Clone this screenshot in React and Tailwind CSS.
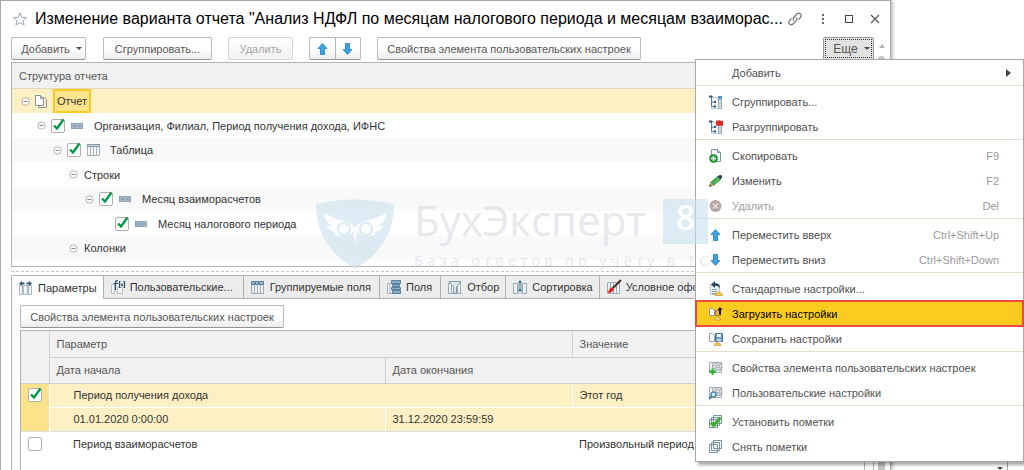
import React, { useState } from 'react';

const TableIcon = ({ head = '#5b7d95', children }) => (
  <svg viewBox="0 0 16 16" className="w-4 h-4 shrink-0" aria-hidden="true">
    <rect x="1.5" y="3.5" width="12" height="11" fill="#eef2f4" stroke="#9aabb5" />
    <path d="M2 3h11v2.5H2z" fill={head} />
    <path d="M4.5 6v8M7.5 6v8M10.5 6v8" stroke="#9aabb5" fill="none" />
    {children}
  </svg>
);

const ParamsIcon = () => (
  <svg viewBox="0 0 16 16" className="w-4 h-4 shrink-0" aria-hidden="true">
    <path d="M1.5 5.5h3v9h-3zM5.5 5.5h4v9h-4zM10.5 5.5h3v9h-3z" fill="#f0f4f6" stroke="#a9b8c1" />
    <path d="M1 3.5L4 1v1.500h2.500v2H4V6zM14 3.500L11 1v1.500H8.500v2H11V6z" fill="#35586f" />
  </svg>
);

const FunctionIcon = () => (
  <svg viewBox="0 0 16 16" className="w-4 h-4 shrink-0" aria-hidden="true">
    <path d="M1.5 5.5h3v9h-3zM7.5 8.5h5v6h-5z" fill="#f3f6f8" stroke="#b3c0c8" />
    <path d="M8 1.500c-2 0-2.500.5-2.500 2.500v7M3.500 4.500H8M10.500 2.500h-1v6h1M13.500 2.500h1v6h-1" stroke="#2f526b" strokeWidth="1.2" fill="none" />
    <path d="M11 4.500l2 2.500M13 4.500L11 7" stroke="#2f526b" fill="none" />
  </svg>
);

const GroupFieldsIcon = () => (
  <TableIcon head="#44708f">
    <path d="M1.5 2.5h3v3h-3zM5.5 2.5h3v3h-3zM9.5 2.5h4v3h-4z" fill="#9fc0d6" stroke="#5a7d95" />
  </TableIcon>
);

const FieldsIcon = () => (
  <svg viewBox="0 0 16 16" className="w-4 h-4 shrink-0" aria-hidden="true">
    <path d="M1.5 4.5h5v10h-5zM4 5v9" fill="#f3f6f8" stroke="#a3b2bb" />
    <path d="M5.5 1.5h9v3h-9zM6.5 5.5h7v2h-7zM5.5 8.5h9v2h-9zM6.5 11.5h8v3h-8z" fill="#8db3cc" stroke="#5b8099" />
  </svg>
);

const FilterIcon = () => (
  <svg viewBox="0 0 16 16" className="w-4 h-4 shrink-0" aria-hidden="true">
    <rect x="1.5" y="4.5" width="12" height="10" fill="#eef2f4" stroke="#9aabb5" />
    <path d="M4.5 5v9M10.5 5v9" stroke="#9aabb5" />
    <path d="M2 2.5h12L9.5 8v6h-3V8z" fill="#dce6ec" stroke="#8498a6" />
  </svg>
);

const SortIcon = () => (
  <svg viewBox="0 0 16 16" className="w-4 h-4 shrink-0" aria-hidden="true">
    <path d="M1.5 4.5h4v10h-4zM10.5 4.5h4v10h-4z" fill="#eef2f4" stroke="#9aabb5" />
    <path d="M6.5 3.5h3v11h-3z" fill="#fff" stroke="#b0bec7" />
    <path d="M8 1l2 2.5H8.500v7H10L8 13l-2-2.500h1.500v-7H6z" fill="#26638f" />
  </svg>
);

const BrushIcon = () => (
  <svg viewBox="0 0 16 16" className="w-4 h-4 shrink-0" aria-hidden="true">
    <path d="M1.5 3.5h12v11h-12zM4.5 4v10M7.5 4v10M10.5 4v10" fill="#eef2f4" stroke="#9aabb5" />
    <path d="M15 1L6.5 9.5" stroke="#4a2419" strokeWidth="1.8" />
    <path d="M5.5 8.5l2 2c0 2-3 3.500-6 3.500 1.500-1 1.500-5.500 4-5.500z" fill="#ec1c1c" />
  </svg>
);

const ArrowIcon = ({ down }) => (
  <svg viewBox="0 0 16 16" className="w-4 h-4 shrink-0" aria-hidden="true">
    <path
      d={down ? 'M7.5 13.5L3 8.5h2.5v-6h4v6H12z' : 'M7.5 2.5l4.500 5H9.500v6h-4v-6H3z'}
      fill="#3aa5e2"
      stroke="#2a7db5"
      strokeWidth="0.8"
    />
  </svg>
);

const GroupIcon = ({ remove }) => (
  <svg viewBox="0 0 16 16" className="w-4 h-4 shrink-0" aria-hidden="true">
    <path d="M3.5 3.5h9v11h-9z" fill="#f3f6f8" stroke="#c3cdd3" />
    <path d="M1 2.500h4M3.500 3v9.500H7M3.500 8H6" stroke="#5a7d95" fill="none" />
    <path d="M10.5 2.5h3v12h-3zM10.5 6h3M10.5 9h3M10.5 12h3" fill="#dfe7ec" stroke="#9aabb5" />
    <path d="M10 2h4v3h-4z" fill="#4f96c6" />
    <path d="M1 1.500h3v2H1zM6 7h2v2H6zM6 11.500h2v2H6z" fill="#31566f" />
    {remove && <path d="M8 1.500l2 .3L11.500 1 13 2l2-.5V7l-2-.5-1.500.5L10 6.500 8 7z" fill="#dc2a2a" />}
  </svg>
);

const CopyIcon = () => (
  <svg viewBox="0 0 16 16" className="w-4 h-4 shrink-0" aria-hidden="true">
    <path d="M3.5 1.500h6l3 3v9h-9z" fill="#f6f8f9" stroke="#7d95a4" />
    <path d="M9.5 1.500v3h3" fill="none" stroke="#7d95a4" />
    <circle cx="5.5" cy="10.500" r="4" fill="#1f9c38" stroke="#147528" strokeWidth="0.6" />
    <path d="M5.5 8v5M3 10.500h5" stroke="#fff" strokeWidth="1.4" />
  </svg>
);

const PencilIcon = () => (
  <svg viewBox="0 0 16 16" className="w-4 h-4 shrink-0" aria-hidden="true">
    <path d="M1.5 13.5l1.5-4.500 3 3z" fill="#eab766" stroke="#77623f" strokeWidth="0.7" />
    <path d="M3 9l6.500-5.500 3 3L6 12z" fill="#4eb556" stroke="#2f7f39" strokeWidth="0.7" />
    <path d="M9.5 3.500L11.500 2h1.500l1 1v1.500l-1.500 2z" fill="#2f4456" />
    <path d="M1.5 13.500l.7-2 1.300 1.300z" fill="#333" />
  </svg>
);

const DeleteIcon = () => (
  <svg viewBox="0 0 16 16" className="w-4 h-4 shrink-0" aria-hidden="true">
    <circle cx="7.5" cy="8" r="6" fill="#b8a5a5" />
    <path d="M5 5.500l5 5M10 5.500l-5 5" stroke="#e8e1e1" strokeWidth="1.4" />
  </svg>
);

const StandardIcon = () => (
  <svg viewBox="0 0 16 16" className="w-4 h-4 shrink-0" aria-hidden="true">
    <path d="M2.5 3.500h9v10h-9z" fill="#eef3f6" stroke="#b5c5cf" />
    <path d="M4 8.500h5M4 10.500h5M4 12.500h4" stroke="#7fa0b6" />
    <path d="M3 3.500L7 0v2.200c3.500 0 5 2 5 5.800-1-2-2-3.200-5-3.200V7z" fill="#1f4560" />
    <path d="M7 14.500c0-2 2-3.500 3.500-3.500s4 1.500 4 3.500z" fill="#f6c646" stroke="#c9962a" strokeWidth="0.7" />
  </svg>
);

const LoadIcon = () => (
  <svg viewBox="0 0 16 16" className="w-4 h-4 shrink-0" aria-hidden="true">
    <path d="M1.5 2.500h3l2 2v5h-5z" fill="#fff" stroke="#8b98a0" />
    <path d="M7.5 4.500h5v5h-5z" fill="#f4b12c" stroke="#a77d2c" />
    <path d="M12 1l2.500 3H13v4.500h-2V4H9.500z" fill="#111" />
    <path d="M6.500 14c0-2 1.500-3 3-3s3 1 3 3z" fill="#fbe28c" stroke="#c28e20" strokeWidth="0.8" />
  </svg>
);

const SaveIcon = () => (
  <svg viewBox="0 0 16 16" className="w-4 h-4 shrink-0" aria-hidden="true">
    <path d="M1.5 2.500h3l2 2v6h-5z" fill="#fff" stroke="#8b9fac" />
    <path d="M7.500 2.500h7v8h-7z" fill="#6f9dc0" stroke="#4c7698" />
    <path d="M9 3h4v3H9z" fill="#e8f0f5" />
    <path d="M9 8h4v2.500H9z" fill="#c3d5e2" />
    <path d="M6.500 14.500c0-2 1.500-3 3-3s3.500 1 3.500 3z" fill="#f6c646" stroke="#c9962a" strokeWidth="0.7" />
  </svg>
);

const GearIcon = ({ search }) => (
  <svg viewBox="0 0 16 16" className="w-4 h-4 shrink-0" aria-hidden="true">
    <path d="M1.5 2.500h12v10h-12zM4.500 3v9" fill="#f0f2f3" stroke="#a5afb5" />
    <circle cx="10" cy="6.500" r="4" fill="#d9dde0" stroke="#8f999f" strokeWidth="1.200" strokeDasharray="2 1" />
    <circle cx="10" cy="6.500" r="1.500" fill="#fff" stroke="#8f999f" />
    {search ? (
      <>
        <circle cx="5.500" cy="9.500" r="2.500" fill="#dceaf5" stroke="#3b749c" strokeWidth="1.200" />
        <path d="M3.700 11.300L1 14" stroke="#3b749c" strokeWidth="1.800" />
      </>
    ) : (
      <path d="M4.500 8.500v6.500M1 11.500h7" stroke="#1fb32e" strokeWidth="2" />
    )}
  </svg>
);

const MarksIcon = ({ checked }) => (
  <svg viewBox="0 0 16 16" className="w-4 h-4 shrink-0" aria-hidden="true">
    <path d="M5.500 1.500h8v8h-8zM3.500 3.500h8v8h-8zM1.500 5.500h8v8h-8z" fill="#f5f8fa" stroke="#7b92a3" />
    {checked && <path d="M3 8.500L5.500 11.500L12.500 3.500" fill="none" stroke="#3fae2a" strokeWidth="3" />}
  </svg>
);

const ReportIcon = () => (
  <svg viewBox="0 0 12 14" className="w-3 h-3.5 shrink-0" aria-hidden="true">
    <path d="M.5 1.500h5l3 3v7h-8z" fill="#fff" stroke="#7f93a1" />
    <path d="M8.500 3.500h1l2 2v8H3.500v-2" fill="none" stroke="#7f93a1" />
    <path d="M5.500 1.500v3h3" fill="none" stroke="#7f93a1" />
  </svg>
);

const FieldIcon = () => (
  <svg viewBox="0 0 12 6" className="w-3 h-1.5 shrink-0" aria-hidden="true">
    <rect x="0.500" y="0.500" width="11" height="5" fill="#b9c8d4" stroke="#8ea3b5" />
    <path d="M2 2h1.500v2H2zM5 2h2v2H5zM8.500 2H10v2H8.500z" fill="#fff" stroke="#68839a" strokeWidth="0.800" />
  </svg>
);

const GridIcon = () => (
  <svg viewBox="0 0 13 12" className="w-[13px] h-3 shrink-0" aria-hidden="true">
    <path d="M.5.5h12v11H.5zM3.500 3v8.500M6.500 3v8.500M9.500 3v8.500" fill="#f4f5f6" stroke="#a9b1b6" />
    <path d="M.5.5h12v2H.5z" fill="#c9d4dc" stroke="#8798a6" />
  </svg>
);

const Toggle = () => (
  <button type="button" aria-label="Свернуть" className="flex shrink-0">
    <svg viewBox="0 0 9 9" className="w-[9px] h-[9px]">
      <circle cx="4.500" cy="4.500" r="3.700" fill="#fff" stroke="#a3a3a3" strokeWidth="0.800" />
      <path d="M2.500 4.500h4" stroke="#8a8a8a" />
    </svg>
  </button>
);

const Check = ({ label, initial = true }) => {
  const [checked, setChecked] = useState(initial);

  return (
    <span className="relative flex w-3.5 h-3.5 shrink-0">
      <input
        type="checkbox"
        aria-label={label}
        checked={checked}
        onChange={() => setChecked(!checked)}
        className="appearance-none w-3.5 h-3.5 border border-[#b0b0b0] rounded-xs bg-white"
      />
      {checked && (
        <svg viewBox="0 0 14 14" className="absolute inset-0 w-3.5 h-3.5 pointer-events-none overflow-visible">
          <path d="M3 6.500L6 9.500L12.500 0.500" fill="none" stroke="#009a46" strokeWidth="2.400" />
        </svg>
      )}
    </span>
  );
};

const Caret = () => (
  <span className="border-x-3 border-t-3 border-x-transparent border-t-[#4a4a4a]" />
);

const buttonClass =
  'flex items-center justify-center h-[23px] border border-[#b8b8b8] border-b-[#949494] rounded-xs bg-gradient-to-b from-white from-50% to-[#ececec] text-[#555] whitespace-nowrap';

const treeRows = [
  { id: 1, label: 'Организация, Филиал, Период получения дохода, ИФНС', pad: 'pl-[25px]', check: true, icon: <FieldIcon /> },
  { id: 2, label: 'Таблица', pad: 'pl-[41px]', check: true, icon: <GridIcon /> },
  { id: 3, label: 'Строки', pad: 'pl-[57px]' },
  { id: 4, label: 'Месяц взаиморасчетов', pad: 'pl-[73px]', check: true, icon: <FieldIcon /> },
  { id: 5, label: 'Месяц налогового периода', pad: 'pl-[103px]', check: true, icon: <FieldIcon />, leaf: true },
  { id: 6, label: 'Колонки', pad: 'pl-[57px]' },
  { id: 7, pad: 'pl-[73px]', check: true, icon: <FieldIcon /> },
];

const tabs = [
  { label: 'Параметры', icon: <ParamsIcon />, pad: 'pr-1.5' },
  { label: 'Пользовательские...', icon: <FunctionIcon />, pad: 'pr-2.5' },
  { label: 'Группируемые поля', icon: <GroupFieldsIcon />, pad: 'pr-2' },
  { label: 'Поля', icon: <FieldsIcon />, pad: 'pr-2' },
  { label: 'Отбор', icon: <FilterIcon />, pad: 'pr-1.5' },
  { label: 'Сортировка', icon: <SortIcon />, pad: 'pr-1.5' },
  { label: 'Условное оформление', icon: <BrushIcon />, pad: 'pr-2' },
];

const menuGroups = [
  [{ label: 'Добавить', submenu: true }],
  [
    { label: 'Сгруппировать...', icon: <GroupIcon /> },
    { label: 'Разгруппировать', icon: <GroupIcon remove /> },
  ],
  [
    { label: 'Скопировать', icon: <CopyIcon />, keys: 'F9' },
    { label: 'Изменить', icon: <PencilIcon />, keys: 'F2' },
    { label: 'Удалить', icon: <DeleteIcon />, keys: 'Del', disabled: true },
  ],
  [
    { label: 'Переместить вверх', icon: <ArrowIcon />, keys: 'Ctrl+Shift+Up' },
    { label: 'Переместить вниз', icon: <ArrowIcon down />, keys: 'Ctrl+Shift+Down' },
  ],
  [
    { label: 'Стандартные настройки...', icon: <StandardIcon /> },
    { label: 'Загрузить настройки', icon: <LoadIcon />, active: true },
    { label: 'Сохранить настройки', icon: <SaveIcon /> },
  ],
  [
    { label: 'Свойства элемента пользовательских настроек', icon: <GearIcon /> },
    { label: 'Пользовательские настройки', icon: <GearIcon search /> },
  ],
  [
    { label: 'Установить пометки', icon: <MarksIcon checked /> },
    { label: 'Снять пометки', icon: <MarksIcon /> },
  ],
];

const TitleBar = () => (
  <header className="flex items-center h-[35px] pl-3 pr-2.5 text-[#555]">
    <button type="button" aria-label="В избранное" className="shrink-0">
      <svg viewBox="0 0 14 14" className="w-3.5 h-3.5">
        <path d="M7 1l1.800 4.300 4.700.3-3.600 3 1.200 4.500L7 10.600l-4.100 2.500 1.200-4.500-3.600-3 4.700-.3z" fill="#fff" stroke="#a0a8ae" />
      </svg>
    </button>
    <h1 className="flex-1 min-w-0 pl-2 text-base leading-6 text-black whitespace-nowrap">
      Изменение варианта отчета "Анализ НДФЛ по месяцам налогового периода и месяцам взаиморас...
    </h1>
    <div className="flex items-center shrink-0">
      <button type="button" aria-label="Ссылка" className="mr-4">
        <svg viewBox="0 0 14 14" className="w-3.5 h-3.5" fill="none" stroke="#777" strokeWidth="1.200">
          <path d="M6 8.500a2.500 2.500 0 0 1 0-3.500l3-3a2.400 2.400 0 0 1 3.500 3.500L10.500 7.500" />
          <path d="M8 5.500A2.500 2.500 0 0 1 8 9l-3 3a2.400 2.400 0 0 1-3.500-3.500L3.500 6.500" />
        </svg>
      </button>
      <button type="button" aria-label="Меню" className="mr-4">
        <svg viewBox="0 0 10 10" className="w-2.5 h-2.5" fill="#666">
          <path d="M4 0h2v2H4zM4 4h2v2H4zM4 8h2v2H4z" />
        </svg>
      </button>
      <button type="button" aria-label="Развернуть" className="mr-4">
        <svg viewBox="0 0 10 10" className="w-2.5 h-2.5">
          <rect x="1.500" y="1.500" width="7" height="7" fill="none" stroke="#444" />
        </svg>
      </button>
      <button type="button" aria-label="Закрыть">
        <svg viewBox="0 0 10 10" className="w-2.5 h-2.5">
          <path d="M1 1l8 8M9 1L1 9" stroke="#555" strokeWidth="1.100" />
        </svg>
      </button>
    </div>
  </header>
);

const Toolbar = () => (
  <div className="flex items-start h-[26px] pt-px">
    <button type="button" className={`${buttonClass} w-[75px] gap-1.5 pl-1.5`}>
      Добавить <Caret />
    </button>
    <button type="button" className={`${buttonClass} w-[109px] ml-[17px]`}>Сгруппировать...</button>
    <button type="button" disabled className="flex items-center justify-center w-[65px] h-[23px] ml-4 border border-[#d6d6d6] rounded-xs bg-gradient-to-b from-white to-[#f1f1f1] text-[#a6a6a6]">
      Удалить
    </button>
    <div className="flex ml-4">
      <button type="button" aria-label="Вверх" className={`${buttonClass} w-[26px] rounded-r-none border-r-0`}>
        <ArrowIcon />
      </button>
      <button type="button" aria-label="Вниз" className={`${buttonClass} w-[26px] rounded-l-none`}>
        <ArrowIcon down />
      </button>
    </div>
    <button type="button" className={`${buttonClass} w-[264px] ml-4`}>
      Свойства элемента пользовательских настроек
    </button>
    <button type="button" className="w-[51px] h-[23px] p-px ml-auto border border-[#9a9a9a] rounded-xs bg-[#e2e2e2] text-xs text-[#555]">
      <span className="flex items-center justify-center gap-1.5 h-full pl-1.5 border border-dotted border-[#333]">
        Еще <Caret />
      </span>
    </button>
  </div>
);

const StructureTree = () => (
  <section className="h-[205px] shrink-0 border border-[#b3b3b3] overflow-hidden text-[#333]">
    <div className="flex items-center h-[25px] pl-[7px] bg-[#f1f1f1] text-[#555]">Структура отчета</div>
    <ul>
      <li className="flex items-center h-[25px] pl-[9px] bg-[#fdf0c4] border-t border-[#e0d9bf]">
        <Toggle />
        <span className="ml-[5px]">
          <ReportIcon />
        </span>
        <span className="flex items-center h-6 ml-1.5 px-0.5 border-2 border-[#fccb22] bg-[#fee48c]">Отчет</span>
      </li>
      {treeRows.map((row) => (
        <li
          key={row.id}
          className={`flex items-center odd:h-6 even:h-[25px] odd:bg-[#f9f9f9] whitespace-nowrap ${row.pad}`}
        >
          {!row.leaf && <Toggle />}
          {row.check && (
            <span className={row.leaf ? '' : 'ml-[5px]'}>
              <Check label={row.label || 'Поле'} />
            </span>
          )}
          {row.icon && <span className="flex w-[17px] ml-1.5">{row.icon}</span>}
          <span className="ml-1.5">{row.label}</span>
        </li>
      ))}
    </ul>
  </section>
);

const Tabs = () => (
  <div role="tablist" className="flex h-6 shrink-0 overflow-hidden text-[#333]">
    {tabs.map((tab, i) => (
      <button
        key={tab.label}
        type="button"
        role="tab"
        aria-selected={i === 0}
        className={`flex items-center shrink-0 gap-1 pl-1.5 whitespace-nowrap border-t border-l border-[#b0b0b0] ${
          i === 0 ? 'bg-white rounded-tl-xs' : 'bg-[#ececec] border-b'
        } ${tab.pad}`}
      >
        {tab.icon}
        {tab.label}
      </button>
    ))}
  </div>
);

const ParametersTable = () => (
  <table className="w-full table-fixed border-collapse text-left text-[#333]">
    <colgroup>
      <col className="w-7" />
      <col className="w-[336px]" />
      <col className="w-[187px]" />
      <col />
    </colgroup>
    <thead className="bg-[#f1f1f1] text-[#555]">
      <tr className="h-[26px]">
        <th rowSpan={2} className="border-r border-b border-[#cfcfcf]" aria-label="Использование" />
        <th colSpan={2} className="pl-[7px] font-normal border-r border-b border-[#cfcfcf]">Параметр</th>
        <th className="pl-[7px] font-normal border-b border-[#cfcfcf]">Значение</th>
      </tr>
      <tr className="h-[26px]">
        <th className="pl-[7px] font-normal border-r border-b border-[#cfcfcf]">Дата начала</th>
        <th colSpan={2} className="pl-[7px] font-normal border-b border-[#cfcfcf]">Дата окончания</th>
      </tr>
    </thead>
    <tbody>
      <tr className="h-6 bg-[#fdf0c4]">
        <td rowSpan={2} className="pt-1 pl-[7px] align-top bg-[#fee28a] border-r border-white">
          <Check label="Период получения дохода" />
        </td>
        <td colSpan={2} className="pl-6 border-r border-b border-white">Период получения дохода</td>
        <td className="pl-[7px] border-b border-white">Этот год</td>
      </tr>
      <tr className="h-6 bg-[#fdf0c4]">
        <td className="pl-6 border-r border-white">01.01.2020 0:00:00</td>
        <td colSpan={2} className="pl-[7px]">31.12.2020 23:59:59</td>
      </tr>
      <tr className="h-[26px] border-t border-[#dcdcdc]">
        <td className="pl-[7px]">
          <Check label="Период взаиморасчетов" initial={false} />
        </td>
        <td colSpan={2} className="pl-6">Период взаиморасчетов</td>
        <td className="pl-[7px] whitespace-nowrap">Произвольный период</td>
      </tr>
    </tbody>
  </table>
);

const Watermark = () => (
  <div className="absolute left-[316px] top-[199px] z-30 flex items-start pointer-events-none opacity-60 font-['Open_Sans',sans-serif]">
    <svg viewBox="0 0 78 70" className="w-[78px] h-[70px]">
      <path d="M0 5Q39-4 78 5C78 37 62 56 39 70 16 56 0 37 0 5z" fill="#c9e1ef" />
      <path d="M8 14c10 8 26 6 31 15 5-9 21-7 31-15-1 8-4 10-7 12 2 1 3 1 4 1-2 5-6 6-9 6l2 2c-3 2-6 2-8 1-5 2-9-1-11-4l-2 14-2-14c-2 3-6 6-11 4-2 1-5 1-8-1l2-2c-3 0-7-1-9-6 1 0 2 0 4-1-3-2-6-4-7-12z" fill="#fff" />
      <circle cx="28" cy="30" r="6" fill="#fff" stroke="#c9e1ef" strokeWidth="2.500" />
      <circle cx="50" cy="30" r="6" fill="#fff" stroke="#c9e1ef" strokeWidth="2.500" />
    </svg>
    <div className="ml-5 text-[#d9dae2]">
      <div className="flex items-start">
        <div className="w-[249px] text-[42px] leading-[42px] whitespace-nowrap">БухЭксперт</div>
        <div className="w-[45px] h-[45px] bg-[#c9e1ef] text-center text-[34px] leading-9 font-semibold text-white">8</div>
      </div>
      <div className="pt-1 text-[15px] leading-6 tracking-[4px] whitespace-nowrap">База ответов по учёту в 1С</div>
    </div>
  </div>
);

const MoreMenu = () => (
  <div
    role="menu"
    className="absolute right-0 top-[59px] z-20 w-[329px] pb-0.5 border border-[#a8a8a8] bg-white text-[#505050] shadow-[3px_3px_3px_rgba(0,0,0,0.35)]"
  >
    {menuGroups.map((group, i) => (
      <div key={group[0].label} className={i > 0 ? 'pt-[3px] border-t border-[#e2dfcb]' : ''}>
        {group.map((item) => (
          <button
            key={item.label}
            type="button"
            role="menuitem"
            disabled={item.disabled}
            className={`flex items-center w-full h-[25px] pl-3 text-left whitespace-nowrap ${
              item.active ? 'bg-[#fbcb1f] text-black outline-2 outline-[#ee4a44] -outline-offset-1' : ''
            } ${item.disabled ? 'text-[#a0a0a0]' : ''}`}
          >
            <span className="flex w-6 shrink-0">{item.icon}</span>
            <span className="flex-1">{item.label}</span>
            {item.keys && <span className="pr-6 text-[#999]">{item.keys}</span>}
            {item.submenu && (
              <span className="mr-3 border-y-4 border-l-5 border-y-transparent border-l-[#444]" />
            )}
          </button>
        ))}
      </div>
    ))}
  </div>
);

export default function App() {
  return (
    <div className="relative flex h-screen overflow-hidden bg-white font-['Liberation_Sans',Arial,sans-serif] text-[11px] leading-4">
      <main className="flex flex-col w-[87%] border-t border-x border-[#a8a8a8] shadow-[2px_0_3px_rgba(0,0,0,0.25)]">
        <TitleBar />
        <div className="flex flex-1 min-h-0">
          <div className="flex flex-col flex-1 min-w-0 pl-2.5">
            <Toolbar />
            <StructureTree />
            <div className="h-2 shrink-0 flex items-center">
              <div className="w-full border-t border-dashed border-[#c8c8c8]" />
            </div>
            <Tabs />
            <div className="flex flex-col flex-1 pt-1.5 px-2 border-x border-[#b3b3b3]">
              <button type="button" className={`${buttonClass} w-[264px] mb-0.5`}>
                Свойства элемента пользовательских настроек
              </button>
              <div className="flex-1 border-t border-x border-[#b3b3b3]">
                <ParametersTable />
              </div>
            </div>
          </div>
          <div className="flex flex-col items-center w-4 pt-2 shrink-0">
            <span className="border-x-3 border-b-4 border-x-transparent border-b-[#b5b5b5]" />
            <div className="flex-1 w-[7px] mt-2 rounded-t-full bg-[#c4c4c4]" />
          </div>
        </div>
      </main>
      <aside className="flex flex-1 items-end justify-end pr-4">
        <div className="flex items-end pr-1 h-2.5 border-r border-[#a8a8a8]">
          <Caret />
        </div>
      </aside>
      <Watermark />
      <MoreMenu />
    </div>
  );
}
